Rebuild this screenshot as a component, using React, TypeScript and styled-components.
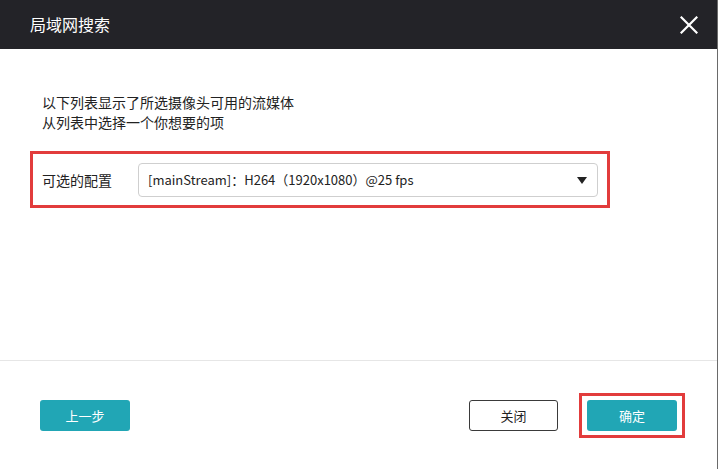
import React from "react";
import styled, { createGlobalStyle } from "styled-components";

const GlobalStyle = createGlobalStyle`
  html, body {
    margin: 0;
    padding: 0;
    background: #ffffff;
  }
  body {
    font-family: "Noto Sans CJK SC", "Microsoft YaHei", sans-serif;
    color: #222;
  }
  * { box-sizing: border-box; }
`;

const Dialog = styled.div`
  width: 718px;
  height: 469px;
  display: flex;
  flex-direction: column;
  background: #fff;
  border-right: 1px solid #6a6a6a;
`;

const Header = styled.div`
  height: 49px;
  flex: none;
  background: #232328;
  display: flex;
  align-items: center;
  justify-content: space-between;
  padding: 0 19px 0 30px;
`;

const Title = styled.div`
  color: #fff;
  font-size: 16px;
  line-height: 20px;
  margin-top: -1px;
`;

const CloseButton = styled.button`
  width: 18px;
  height: 18px;
  padding: 0;
  border: none;
  background: transparent;
  display: flex;
  align-items: center;
  justify-content: center;
  cursor: pointer;
  margin-top: 1px;
`;

const Body = styled.div`
  flex: 1;
  padding: 44px 0 0 30px;
`;

const Description = styled.div`
  font-size: 14px;
  line-height: 19.5px;
  padding-left: 12px;
  color: #222;
`;

const ConfigRow = styled.div`
  margin-top: 19px;
  width: 580px;
  height: 57px;
  border: 3px solid #e23c3c;
  display: flex;
  align-items: center;
  padding-left: 9px;
`;

const Label = styled.div`
  width: 96px;
  font-size: 14px;
  color: #222;
`;

const Select = styled.div`
  width: 460px;
  height: 34px;
  border: 1px solid #cfcfcf;
  border-radius: 4px;
  display: flex;
  align-items: center;
  justify-content: space-between;
  padding: 0 10px 0 9px;
  font-size: 13px;
  color: #222;
`;

const Arrow = styled.span`
  width: 0;
  height: 0;
  border-left: 5px solid transparent;
  border-right: 5px solid transparent;
  border-top: 7px solid #222;
  margin-top: 1px;
`;

const Footer = styled.div`
  height: 109px;
  flex: none;
  border-top: 1px solid #e6e6e6;
  display: flex;
  align-items: center;
  justify-content: space-between;
  padding: 0 32px 0 40px;
`;

const RightGroup = styled.div`
  display: flex;
  align-items: center;
  gap: 21px;
`;

const Button = styled.button<{ $primary?: boolean }>`
  width: ${(p) => (p.$primary ? "90px" : "89px")};
  height: 31px;
  border-radius: 3px;
  font-family: "Noto Sans CJK SC", "Microsoft YaHei", sans-serif;
  font-size: 13px;
  padding: 0;
  cursor: pointer;
  background: ${(p) => (p.$primary ? "#21a6b5" : "#ffffff")};
  color: ${(p) => (p.$primary ? "#ffffff" : "#222")};
  border: ${(p) => (p.$primary ? "none" : "1px solid #3a3a3a")};
`;

const Highlight = styled.div`
  border: 3px solid #e23c3c;
  padding: 4px 5px;
  display: flex;
`;

export default function App() {
  return (
    <>
      <GlobalStyle />
      <Dialog>
        <Header>
          <Title>局域网搜索</Title>
          <CloseButton aria-label="close">
            <svg width="18" height="18" viewBox="0 0 18 18">
              <path d="M1.5 1.5 L16.5 16.5 M16.5 1.5 L1.5 16.5" stroke="#fff" strokeWidth="2.2" strokeLinecap="square" />
            </svg>
          </CloseButton>
        </Header>
        <Body>
          <Description>
            以下列表显示了所选摄像头可用的流媒体
            <br />
            从列表中选择一个你想要的项
          </Description>
          <ConfigRow>
            <Label>可选的配置</Label>
            <Select>
              <span>[mainStream]：H264（1920x1080）@25 fps</span>
              <Arrow />
            </Select>
          </ConfigRow>
        </Body>
        <Footer>
          <Button $primary>上一步</Button>
          <RightGroup>
            <Button>关闭</Button>
            <Highlight>
              <Button $primary>确定</Button>
            </Highlight>
          </RightGroup>
        </Footer>
      </Dialog>
    </>
  );
}
